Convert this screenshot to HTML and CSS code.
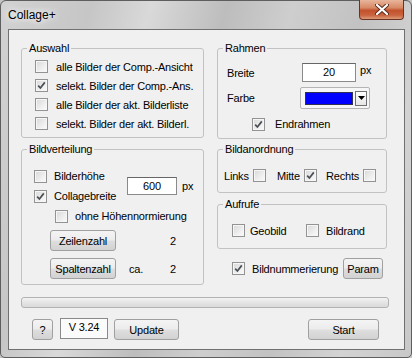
FILE: index.html
```html
<!DOCTYPE html>
<html lang="de">
<head>
  <meta charset="UTF-8" />
  <title>Collage+</title>
  <link rel="stylesheet" href="styles.css">
</head>
<body>
  <div class="window">
    <div class="titlebar">
      <span class="title">Collage+</span>
      <div class="close">
        <svg width="14" height="11" viewBox="0 0 14 11">
          <path d="M2 1 L12 10 M12 1 L2 10" stroke="#5a2a1a" stroke-width="4" stroke-linecap="round"/>
          <path d="M2 1 L12 10 M12 1 L2 10" stroke="#fff" stroke-width="2.2" stroke-linecap="round"/>
        </svg>
      </div>
    </div>

    <div class="client">
      <div class="columns">
        <!-- linke Spalte -->
        <div class="col">
          <fieldset class="group auswahl">
            <legend>Auswahl</legend>
            <div class="group-body list">
              <div class="check-row"><span class="cb"></span>alle Bilder der Comp.-Ansicht</div>
              <div class="check-row"><span class="cb checked"></span>selekt. Bilder der Comp.-Ans.</div>
              <div class="check-row"><span class="cb"></span>alle Bilder der akt. Bilderliste</div>
              <div class="check-row"><span class="cb"></span>selekt. Bilder der akt. Bilderl.</div>
            </div>
          </fieldset>

          <fieldset class="group verteilung">
            <legend>Bildverteilung</legend>
            <div class="group-body">
              <div class="size-grid">
                <div class="check-row"><span class="cb"></span>Bilderhöhe</div>
                <div class="field size-field">600</div>
                <div class="unit">px</div>
                <div class="check-row"><span class="cb checked"></span>Collagebreite</div>
              </div>
              <div class="check-row indent"><span class="cb"></span>ohne Höhennormierung</div>
              <div class="count-grid">
                <button class="btn count-btn">Zeilenzahl</button>
                <span></span>
                <span>2</span>
                <button class="btn count-btn">Spaltenzahl</button>
                <span>ca.</span>
                <span>2</span>
              </div>
            </div>
          </fieldset>
        </div>

        <!-- rechte Spalte -->
        <div class="col">
          <fieldset class="group rahmen">
            <legend>Rahmen</legend>
            <div class="group-body">
              <div class="form-row">
                <span class="form-label">Breite</span>
                <div class="field width-field">20</div>
                <span class="unit">px</span>
              </div>
              <div class="form-row color-row">
                <span class="form-label">Farbe</span>
                <div class="color-combo">
                  <span class="swatch"></span>
                  <span class="drop">
                    <svg width="7" height="4" viewBox="0 0 7 4"><path d="M0 0 H7 L3.5 4 Z" fill="#000"/></svg>
                  </span>
                </div>
              </div>
              <div class="check-row end-row"><span class="cb checked"></span>Endrahmen</div>
            </div>
          </fieldset>

          <fieldset class="group anordnung">
            <legend>Bildanordnung</legend>
            <div class="group-body align-grid">
              <div class="align-item">Links<span class="cb"></span></div>
              <div class="align-item">Mitte<span class="cb checked"></span></div>
              <div class="align-item">Rechts<span class="cb"></span></div>
            </div>
          </fieldset>

          <fieldset class="group aufrufe">
            <legend>Aufrufe</legend>
            <div class="group-body call-grid">
              <div class="check-row"><span class="cb"></span>Geobild</div>
              <div class="check-row gap7"><span class="cb"></span>Bildrand</div>
            </div>
          </fieldset>

          <div class="number-row">
            <div class="check-row"><span class="cb checked"></span>Bildnummerierung</div>
            <button class="btn param-btn">Param</button>
          </div>
        </div>
      </div>

      <div class="progress"></div>

      <div class="footer">
        <button class="btn help-btn">?</button>
        <div class="version">V 3.24</div>
        <button class="btn update-btn">Update</button>
        <button class="btn start-btn">Start</button>
      </div>
    </div>
  </div>

  <script>
    // Häkchen in die markierten Kästchen zeichnen
    document.querySelectorAll('.cb.checked').forEach(cb => {
      cb.innerHTML = '<svg width="11" height="11" viewBox="0 0 11 11"><path d="M2.2 5.6 L4.4 8 L8.8 2.4" fill="none" stroke="#4a4f55" stroke-width="1.7"/></svg>';
    });
  </script>
</body>
</html>
```

FILE: styles.css
```css
body {
  margin: 0;
  width: 412px;
  height: 358px;
  overflow: hidden;
  background: #c4c4c4;
  font-family: "Liberation Sans", Arial, sans-serif;
  font-size: 11px;
  letter-spacing: -0.2px;
  color: #000;
}

.window {
  box-sizing: border-box;
  width: 412px;
  height: 358px;
  border: 1px solid #5e5e5e;
  border-radius: 6px 6px 5px 5px;
  padding: 0 6px 7px 7px;
  display: flex;
  flex-direction: column;
  background: linear-gradient(105deg, #d2d2d2 0%, #c6c6c6 18%, #d9d9d9 30%, #bdbdbd 45%, #cecece 58%, #c2c2c2 72%, #d3d3d3 86%, #c8c8c8 100%);
}

.titlebar {
  height: 28px;
  display: flex;
  align-items: flex-start;
}

.title {
  margin-top: 7px;
  font-size: 12px;
  letter-spacing: 0;
  text-shadow: 0 0 6px #fff, 0 0 10px #fff;
}

.close {
  margin-left: auto;
  margin-right: 1px;
  margin-top: -1px;
  width: 45px;
  height: 20px;
  box-sizing: border-box;
  border: 1px solid #6b3324;
  border-top: none;
  border-radius: 0 0 4px 4px;
  background: linear-gradient(#e8b59c 0%, #d88a66 40%, #c2522e 55%, #c9643e 80%, #dc9a78 100%);
  display: flex;
  align-items: center;
  justify-content: center;
}

.client {
  flex: 1;
  background: #f0f0f0;
  border: 1px solid #707070;
  padding: 11px 17px 0 12px;
}

.columns {
  display: grid;
  grid-template-columns: 183px 170px;
  column-gap: 13px;
}

.col {
  display: flex;
  flex-direction: column;
}

.group {
  box-sizing: border-box;
  margin: 0;
  padding: 0;
  min-width: 0;
  border: 1px solid #c2c2c2;
  border-radius: 3px;
}

.group legend {
  margin-left: 5px;
  padding: 0 2px;
  line-height: 14px;
}

.auswahl { height: 97px; }
.verteilung { height: 143px; margin-top: 4px; }
.rahmen { height: 98px; }
.anordnung { height: 51px; margin-top: 3px; }
.aufrufe { height: 52px; margin-top: 4px; }

.list {
  padding: 2px 0 0 13px;
}

.list .check-row {
  height: 19px;
}

.check-row {
  display: flex;
  align-items: center;
  gap: 8px;
  white-space: nowrap;
}

.cb {
  box-sizing: border-box;
  width: 13px;
  height: 13px;
  flex: none;
  border: 1px solid #939393;
  background: linear-gradient(135deg, #d8d8d8 0%, #f2f2f2 70%, #fafafa 100%);
  box-shadow: inset 0 0 0 1px #f6f6f6;
  display: flex;
  align-items: center;
  justify-content: center;
}

.verteilung .group-body {
  padding: 10px 0 0 12px;
}

.size-grid {
  display: grid;
  grid-template-columns: 93px 50px auto;
  grid-template-rows: 20px 20px;
  align-items: center;
}

.size-grid .check-row {
  gap: 7px;
}

.size-field {
  grid-row: 1 / 3;
  grid-column: 2;
}

.size-grid .unit {
  grid-row: 1 / 3;
  grid-column: 3;
  margin-left: 5px;
}

.indent {
  height: 20px;
  padding-left: 21px;
  gap: 7px;
}

.field {
  box-sizing: border-box;
  height: 18px;
  border: 1px solid #8a8a8a;
  border-top-color: #666;
  background: #fff;
  text-align: center;
  line-height: 16px;
}

.count-grid {
  display: grid;
  grid-template-columns: 79px 41px auto;
  row-gap: 7px;
  align-items: center;
  margin: 4px 0 0 16px;
}

.btn {
  box-sizing: border-box;
  height: 21px;
  padding: 0;
  border: 1px solid #a0a0a0;
  border-radius: 3px;
  background: linear-gradient(#f4f4f4 0%, #ececec 48%, #dedede 52%, #d2d2d2 100%);
  font-family: "Liberation Sans", Arial, sans-serif;
  font-size: 11px;
  letter-spacing: -0.2px;
  color: #000;
}

.count-btn { width: 66px; }

.rahmen .group-body {
  padding: 8px 0 0 9px;
}

.form-row {
  display: flex;
  align-items: center;
  height: 19px;
}

.form-label {
  width: 75px;
}

.width-field {
  width: 54px;
  height: 19px;
}

.form-row .unit {
  margin-left: 4px;
  margin-top: -5px;
}

.color-row {
  height: 22px;
  margin-top: 5px;
}

.color-row .form-label { width: 73px; }

.color-combo {
  box-sizing: border-box;
  width: 70px;
  height: 22px;
  border: 1px solid #b4b4b4;
  border-radius: 2px;
  background: #f6f6f6;
  display: flex;
  align-items: center;
  padding: 0 2px 0 4px;
}

.swatch {
  box-sizing: border-box;
  width: 48px;
  height: 13px;
  border: 1px solid #303050;
  background: #0000ff;
}

.drop {
  box-sizing: border-box;
  width: 12px;
  height: 15px;
  margin-left: auto;
  border: 1px solid #707070;
  background: linear-gradient(#ffffff, #e6e6e6);
  display: flex;
  align-items: center;
  justify-content: center;
}

.end-row {
  height: 18px;
  margin-top: 6px;
  padding-left: 25px;
  gap: 10px;
}

.align-grid {
  display: grid;
  grid-template-columns: 53px 49px auto;
  align-items: center;
  padding: 13px 0 0 6px;
}

.align-item {
  display: flex;
  align-items: center;
  gap: 4px;
}

.call-grid {
  display: grid;
  grid-template-columns: 74px auto;
  padding: 13px 0 0 14px;
}

.call-grid .check-row { gap: 5px; }
.call-grid .gap7 { gap: 7px; }

.number-row {
  display: flex;
  align-items: center;
  margin-top: 9px;
  padding-left: 15px;
}

.number-row .check-row { gap: 7px; }

.param-btn {
  width: 40px;
  margin-left: auto;
  margin-right: 4px;
}

.progress {
  box-sizing: border-box;
  width: 368px;
  height: 11px;
  margin-top: 12px;
  border: 1px solid #b2b2b2;
  border-radius: 3px;
  background: linear-gradient(#f3f3f3, #e2e2e2 60%, #dadada);
}

.footer {
  display: flex;
  align-items: center;
  margin-top: 9px;
  padding-left: 11px;
}

.help-btn { width: 21px; margin-top: 2px; }

.version {
  box-sizing: border-box;
  width: 48px;
  height: 21px;
  margin-left: 7px;
  border: 1px solid #8a8a8a;
  background: #fbfbfb;
  text-align: center;
  line-height: 16px;
}

.update-btn { width: 65px; margin-left: 6px; margin-top: 2px; }
.start-btn { width: 71px; margin-left: auto; margin-right: 8px; margin-top: 2px; }
```
